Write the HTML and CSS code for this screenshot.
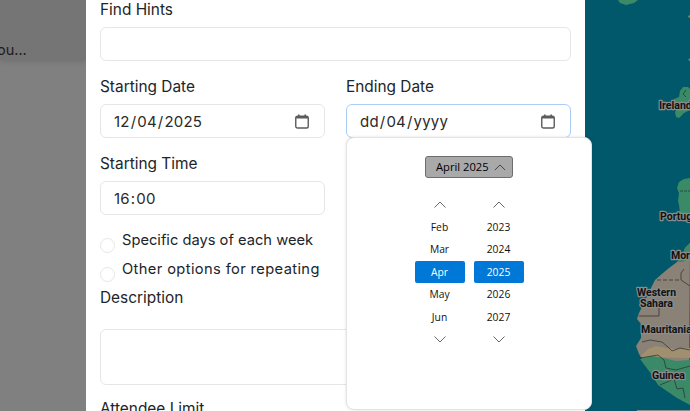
FILE: index.html
```html
<!DOCTYPE html>
<html lang="en">
<head>
<meta charset="utf-8">
<title>Event form</title>
<link rel="stylesheet" href="styles.css">
</head>
<body>
<div class="page">
  <aside class="side">
    <div class="side-card"><span class="side-text">ou...</span></div>
  </aside>
  <main class="modal">
    <div class="field">
      <label class="label">Find Hints</label>
      <div class="input"></div>
    </div>
    <div class="two-col">
      <div class="field">
        <label class="label">Starting Date</label>
        <div class="input date"><span class="value">12<i>/</i>04<i>/</i>2025</span>
          <svg class="cal" viewBox="0 0 14 15"><path d="M3 0.5h1.6v2H3zM9.4 0.5H11v2H9.4z" fill="#5c5c5c"/><path d="M1 4.5V3.6Q1 2 2.6 2h8.8Q13 2 13 3.6v.9z" fill="#5c5c5c"/><rect x="0.75" y="2.2" width="12.5" height="11.8" rx="1.8" fill="none" stroke="#5c5c5c" stroke-width="1.4"/></svg>
        </div>
      </div>
      <div class="field">
        <label class="label">Ending Date</label>
        <div class="input date focus"><span class="value">dd<i>/</i>04<i>/</i>yyyy</span>
          <svg class="cal" viewBox="0 0 14 15"><path d="M3 0.5h1.6v2H3zM9.4 0.5H11v2H9.4z" fill="#5c5c5c"/><path d="M1 4.5V3.6Q1 2 2.6 2h8.8Q13 2 13 3.6v.9z" fill="#5c5c5c"/><rect x="0.75" y="2.2" width="12.5" height="11.8" rx="1.8" fill="none" stroke="#5c5c5c" stroke-width="1.4"/></svg>
        </div>
      </div>
    </div>
    <div class="two-col">
      <div class="field">
        <label class="label">Starting Time</label>
        <div class="input date"><span class="value">16<i class="colon">:</i>00</span></div>
      </div>
    </div>
    <div class="radio-row first"><span class="radio"></span><span class="radio-text">Specific days of each week</span></div>
    <div class="radio-row"><span class="radio"></span><span class="radio-text wide">Other options for repeating</span></div>
    <label class="label desc">Description</label>
    <div class="textarea"></div>
    <label class="label limit">Attendee Limit</label>

    <div class="picker">
      <div class="picker-head">
        <button class="month-btn">April 2025
          <svg class="chev-btn" viewBox="0 0 14 8"><path d="M1 7l6-6 6 6" fill="none" stroke="#333" stroke-width="1"/></svg>
        </button>
      </div>
      <div class="wheels">
        <div class="wheel">
          <svg class="chev" viewBox="0 0 12 7"><path d="M.5 6.5l5.5-5.5 5.5 5.5" fill="none" stroke="#666" stroke-width="1"/></svg>
          <span class="opt">Feb</span><span class="opt">Mar</span><span class="opt sel">Apr</span><span class="opt">May</span><span class="opt">Jun</span>
          <svg class="chev" viewBox="0 0 12 7"><path d="M.5 .5l5.5 5.5 5.5-5.5" fill="none" stroke="#666" stroke-width="1"/></svg>
        </div>
        <div class="wheel">
          <svg class="chev" viewBox="0 0 12 7"><path d="M.5 6.5l5.5-5.5 5.5 5.5" fill="none" stroke="#666" stroke-width="1"/></svg>
          <span class="opt">2023</span><span class="opt">2024</span><span class="opt sel">2025</span><span class="opt">2026</span><span class="opt">2027</span>
          <svg class="chev" viewBox="0 0 12 7"><path d="M.5 .5l5.5 5.5 5.5-5.5" fill="none" stroke="#666" stroke-width="1"/></svg>
        </div>
      </div>
    </div>
  </main>
  <section class="map">
    <svg class="map-svg" viewBox="585 0 105 411">
      <path d="M618 0h20l-4 3-8 2-6-2z" fill="#3a8a68"/>
      <path d="M690 18l-2-1 0-1 2-1zM690 61l-2-1 2-2z" fill="#5f8f5e"/>
      <path d="M683 87l5 0 2 2v21l-6 3-5 5-3-1-1-5 2-4-3-1 0-8 5-2 1-6z" fill="#3a8a68"/>
      <path d="M686 90l-3 4 3 3" fill="none" stroke="#222" stroke-width=".6"/>
      <path d="M690 178l-6 1-5 3-2 6 2 5-1 8 1 4 1 8-1 3 2 3h9z" fill="#3a8a68"/>
      <path d="M680 191h10" stroke="#222" stroke-width=".6" stroke-dasharray="3 1"/>
      <path d="M690 243l-5 5-3 8-5 6-8 6-6 5-8 7-3 6-4 8-5 11-4 8-2 6 4 5 0 14-5 8 3 8 12 17 6 10 19 13 13 7z" fill="#8a8276"/>
      <path d="M690 243l-5 5-3 8-5 6 6 0 7-4z" fill="#3a8a68"/>
      <path d="M648 349l8-3 10 2 10 1 14-1v10l-50-1z" fill="#a09070"/>
      <path d="M640 359l12-3 12 2 12 3 14-1v45l-13-7-19-13-6-10-12-16z" fill="#3a8a68"/>
      <path d="M657 280h23" fill="none" stroke="#2c2c2c" stroke-width=".7" stroke-dasharray="4 2"/>
      <path d="M684 269l-3 4v7l9 6M639 316h20v-11M642 342l8-2 12 2 6 5 4 4 8-3 10 2M640 358l18-3 6 5 2 8 10 2 14-4M660 385l14-6 3 10 6-1 2 10" fill="none" stroke="#2c2c2c" stroke-width=".7"/>
      <path d="M637 410h53v1h-53z" fill="#8c8c8c"/>
      <g class="map-labels">
        <text x="659" y="109">Ireland</text>
        <text x="660" y="220">Portug</text>
        <text x="671" y="259">Mor</text>
        <text x="637" y="296">Western</text>
        <text x="640" y="307">Sahara</text>
        <text x="641" y="333">Mauritania</text>
        <text x="652" y="379">Guinea</text>
      </g>
    </svg>
  </section>
</div>
</body>
</html>
```
FILE: styles.css
```css
* { box-sizing: border-box; }
html, body { margin: 0; height: 100%; overflow: hidden; }
body { font-family: "Inter", "Noto Sans", sans-serif; color: #212529; }
.page { display: flex; width: 690px; height: 411px; overflow: hidden; }

.side { width: 86px; flex: none; background: #808080; }
.side-card { height: 60px; background: #757575; box-shadow: 0 2px 5px rgba(0,0,0,.12); padding-top: 41px; font-size: 14.5px; line-height: 18px; color: #1c1c1c; overflow: hidden; }
.side-text { display: block; margin-left: -3px; }

.modal { position: relative; width: 499px; flex: none; background: #fff; padding: 0 14px 0 14px; }
.field { min-width: 0; }
.label { display: block; font-size: 15.4px; line-height: 20px; margin-bottom: 7px; color: #212529; }
.input { height: 34px; border: 1px solid #e6e6e6; border-radius: 6px; background: #fff; }
.two-col { display: grid; grid-template-columns: 225px 225px; column-gap: 21px; margin-top: 16px; }
.date { display: flex; align-items: center; justify-content: space-between; padding: 0 15px 0 13px; font-size: 15px; }
.value { display: block; letter-spacing: .2px; color: #2a2a2a; }
.value i { font-style: normal; margin: 0 1px; }
.value .colon { margin: 0 1px; }
.focus { border-color: #a9cdf7; }
.cal { width: 14px; height: 15px; display: block; }

.radio-row { display: flex; height: 19px; margin-top: 10px; }
.radio-row.first { margin-top: 16px; }
.radio { width: 15px; height: 15px; border: 1px solid #e6e6e6; border-radius: 50%; margin-top: 7px; margin-right: 7px; flex: none; }
.radio-text { font-size: 14.7px; line-height: 19px; }
.wide { letter-spacing: .37px; }
.desc { margin-top: 9px; margin-bottom: 21px; }
.textarea { height: 56px; border: 1px solid #e6e6e6; border-radius: 6px; }
.limit { margin-top: 14px; }

.picker { position: absolute; left: 260px; top: 137px; width: 246px; height: 273px; background: #fff; border: 1px solid #e3e3e3; border-radius: 8px; box-shadow: 0 0 3px rgba(0,0,0,.12); font-family: "Open Sans", "Noto Sans", sans-serif; }
.picker-head { display: flex; justify-content: center; padding-top: 18px; }
.month-btn { display: flex; align-items: center; justify-content: space-between; width: 88px; height: 22px; padding: 0 6px 0 10px; background: #a9a9a9; border: 1px solid #6d6d6d; border-radius: 3px; font: 11.2px/20px "Open Sans", "Noto Sans", sans-serif; color: #000; }
.chev-btn { width: 12px; height: 7px; display: block; }
.wheels { display: flex; justify-content: center; gap: 9px; margin-top: 15px; }
.wheel { width: 50px; display: grid; grid-auto-rows: 22.5px; justify-items: center; align-items: center; }
.chev { width: 12px; height: 7px; display: block; }
.opt { width: 100%; height: 22px; font-size: 10.3px; line-height: 22px; text-align: center; color: #111; }
.sel { background: #0078d7; color: #fff; border-radius: 2px; }

.map { flex: 1; background: #02586b; }
.map-svg { display: block; width: 105px; height: 411px; }
.map-labels text { font-family: "Roboto", sans-serif; font-size: 10.5px; font-weight: 700; fill: #111; stroke: #8c8c8c; stroke-width: 2.5px; paint-order: stroke; stroke-linejoin: round; }
```
